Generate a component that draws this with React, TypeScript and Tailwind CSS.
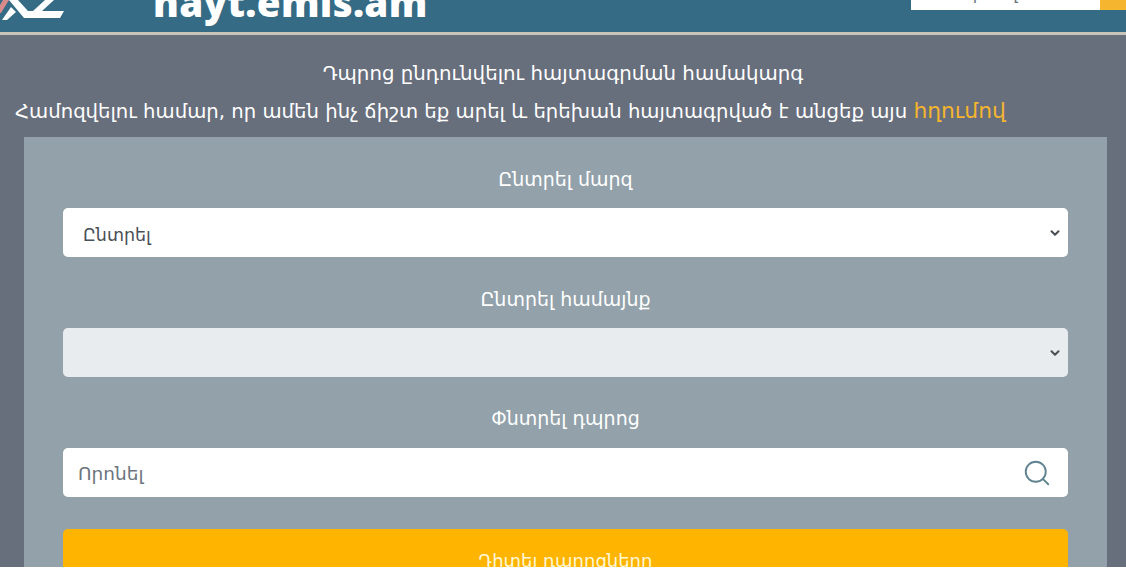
import { ChevronDown, Search } from 'lucide-react';

const font = { fontFamily: '"DejaVu Sans", sans-serif' };

function Logo() {
  return (
    <svg width="66" height="21" viewBox="0 0 66 21" className="shrink-0">
      <path d="M3 0 L9 0 L1 13 L0 13 L0 5 Z" fill="#d98a8a" />
      <path d="M11 7 L16 12 L7 20 L2 20 Z" fill="#ffffff" />
      <path d="M9 0 L18 0 L28 11 L64 11 L60 18 L24 18 Z" fill="#ffffff" />
      <path d="M45 0 L54 0 L42 11 L33 11 Z" fill="#ffffff" />
    </svg>
  );
}

function SelectBox({ label, value, disabled }: { label: string; value?: string; disabled?: boolean }) {
  return (
    <div className="flex flex-col">
      <div className="h-[71px] pt-[29px] text-center text-[19px] leading-[26px] text-white">{label}</div>
      <div
        className={`flex h-[49px] items-center justify-between rounded-[5px] pl-[20px] pr-[6px] text-[17.5px] text-[#495057] ${
          disabled ? 'bg-[#e9ecef]' : 'bg-white'
        }`}
      >
        <span className="pt-[5px]">{value}</span>
        <ChevronDown className="h-[14px] w-[14px] text-[#4a4f55]" strokeWidth={3.5} />
      </div>
    </div>
  );
}

export default function App() {
  return (
    <div className="flex h-[569px] w-[1126px] flex-col overflow-hidden bg-white" style={font}>
      <header className="flex h-[32px] shrink-0 items-start justify-between overflow-hidden bg-[#356b85]">
        <div className="flex items-start">
          <div className="w-[153px] shrink-0">
            <Logo />
          </div>
          <span
            className="mt-[-19px] text-[38.6px] leading-[42px] font-extrabold tracking-[0.3px] text-white"
            style={{ fontFamily: '"Open Sans", sans-serif' }}
          >
            hayt.emis.am
          </span>
        </div>
        <div className="flex h-[10px]">
          <div className="h-[10px] w-[189px] overflow-hidden bg-white pl-[50px] text-[16px] leading-[14px] text-[#6c757d]">
            <div className="mt-[-12px]">Որոնել</div>
          </div>
          <div className="w-[26px] bg-[#f5b52e]" />
        </div>
      </header>
      <div className="h-[3px] shrink-0 bg-[#c9c4b8]" />

      <main className="flex h-[532px] shrink-0 flex-col overflow-hidden bg-[#676e7c] px-[15px]">
        <p className="mt-[25px] text-center text-[19.8px] leading-[28px] text-white">
          Դպրոց ընդունվելու հայտագրման համակարգ
        </p>
        <p className="mt-[9px] h-[28px] whitespace-nowrap text-[19.67px] leading-[28px] text-white">
          Համոզվելու համար, որ ամեն ինչ ճիշտ եք արել և երեխան հայտագրված է անցեք այս{' '}
          <a className="text-[21.8px] text-[#f5b52e]">հղումով</a>
        </p>
        <section className="mt-[12px] ml-[9px] flex h-[500px] w-[1083px] shrink-0 flex-col bg-[#92a1aa] px-[39px]">
          <SelectBox label="Ընտրել մարզ" value="Ընտրել" />
          <SelectBox label="Ընտրել համայնք" disabled />
          <div className="h-[71px] pt-[28px] text-center text-[19px] leading-[26px] text-white">Փնտրել դպրոց</div>
          <div className="flex h-[49px] items-center justify-between rounded-[5px] bg-white pr-[16px] pl-[15px] text-[18.5px] text-[#6c757d]">
            <span className="pt-[3px]">Որոնել</span>
            <Search className="h-[30px] w-[30px] text-[#5f8390]" strokeWidth={1.5} />
          </div>
          <button
            type="button"
            className="mt-[32px] h-[62px] shrink-0 rounded-[5px] bg-[#ffb400] text-center text-[18px] text-[#fff7d6]"
          >
            Դիտել դպրոցները
          </button>
        </section>
      </main>
    </div>
  );
}
